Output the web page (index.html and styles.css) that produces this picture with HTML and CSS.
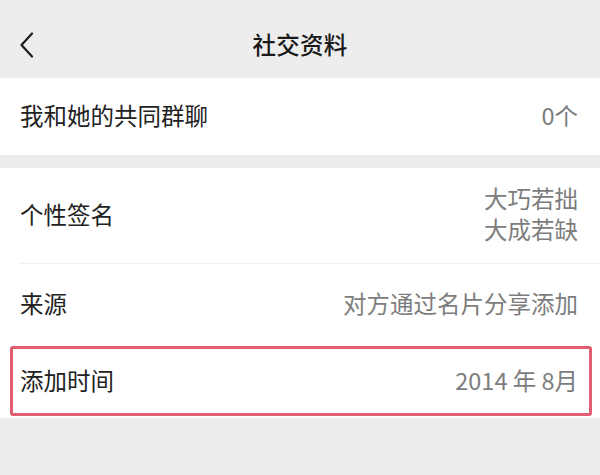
FILE: index.html
```html
<!DOCTYPE html>
<html lang="zh-CN">
<head>
<meta charset="utf-8">
<link rel="stylesheet" href="styles.css">
</head>
<body>
<div class="page">
  <header class="navbar">
    <span class="back">
      <svg width="16" height="26" viewBox="0 0 16 26"><path d="M13 1.5 L2.5 13 L13 24.5" fill="none" stroke="#1c1c1c" stroke-width="2.2" stroke-linecap="round" stroke-linejoin="round"/></svg>
    </span>
    <h1 class="title">社交资料</h1>
  </header>
  <section class="group">
    <div class="row row-groups">
      <span class="label">我和她的共同群聊</span>
      <span class="value">0个</span>
    </div>
  </section>
  <section class="group group-2">
    <div class="row row-sign">
      <span class="label">个性签名</span>
      <span class="value multi">大巧若拙<br>大成若缺</span>
    </div>
    <div class="divider"></div>
    <div class="row row-source">
      <span class="label">来源</span>
      <span class="value">对方通过名片分享添加</span>
    </div>
    <div class="row-wrap">
      <div class="row row-time highlight">
        <span class="label">添加时间</span>
        <span class="value">2014 年 8月</span>
      </div>
    </div>
  </section>
</div>
</body>
</html>
```

FILE: styles.css
```css
html, body {
  margin: 0;
  padding: 0;
}
body {
  background: #ededed;
  font-family: "Noto Sans CJK SC", "Noto Sans", sans-serif;
  color: #1e1e1e;
  width: 600px;
  height: 475px;
  overflow: hidden;
}
.navbar {
  height: 78px;
  display: flex;
  align-items: center;
  justify-content: center;
  position: relative;
  background: #ededed;
}
.back {
  position: absolute;
  left: 19px;
  top: 32px;
  display: flex;
}
.title {
  margin: 0;
  font-size: 23.5px;
  font-weight: 500;
  letter-spacing: 0.2px;
  margin-top: 10px;
  color: #1a1a1a;
}
.group {
  background: #ffffff;
}
.group-2 {
  margin-top: 13px;
}
.row {
  display: flex;
  align-items: center;
  justify-content: space-between;
  padding: 0 22px 3px 20px;
}
.label {
  font-size: 23.5px;
  color: #222222;
}
.value {
  font-size: 23.5px;
  color: #7d7d7d;
  text-align: right;
}
.value.multi {
  line-height: 31px;
}
.row-groups {
  height: 74px;
}
.row-sign {
  height: 92px;
}
.divider {
  height: 1px;
  background: #f2f2f2;
  margin-left: 20px;
}
.row-source {
  height: 78px;
}
.row-wrap {
  padding: 1px 8px 2px 10px;
}
.row-time {
  height: 62px;
  border: 3px solid #e25d70;
  border-radius: 3px;
  padding: 0 11px 2px 7px;
}
```
